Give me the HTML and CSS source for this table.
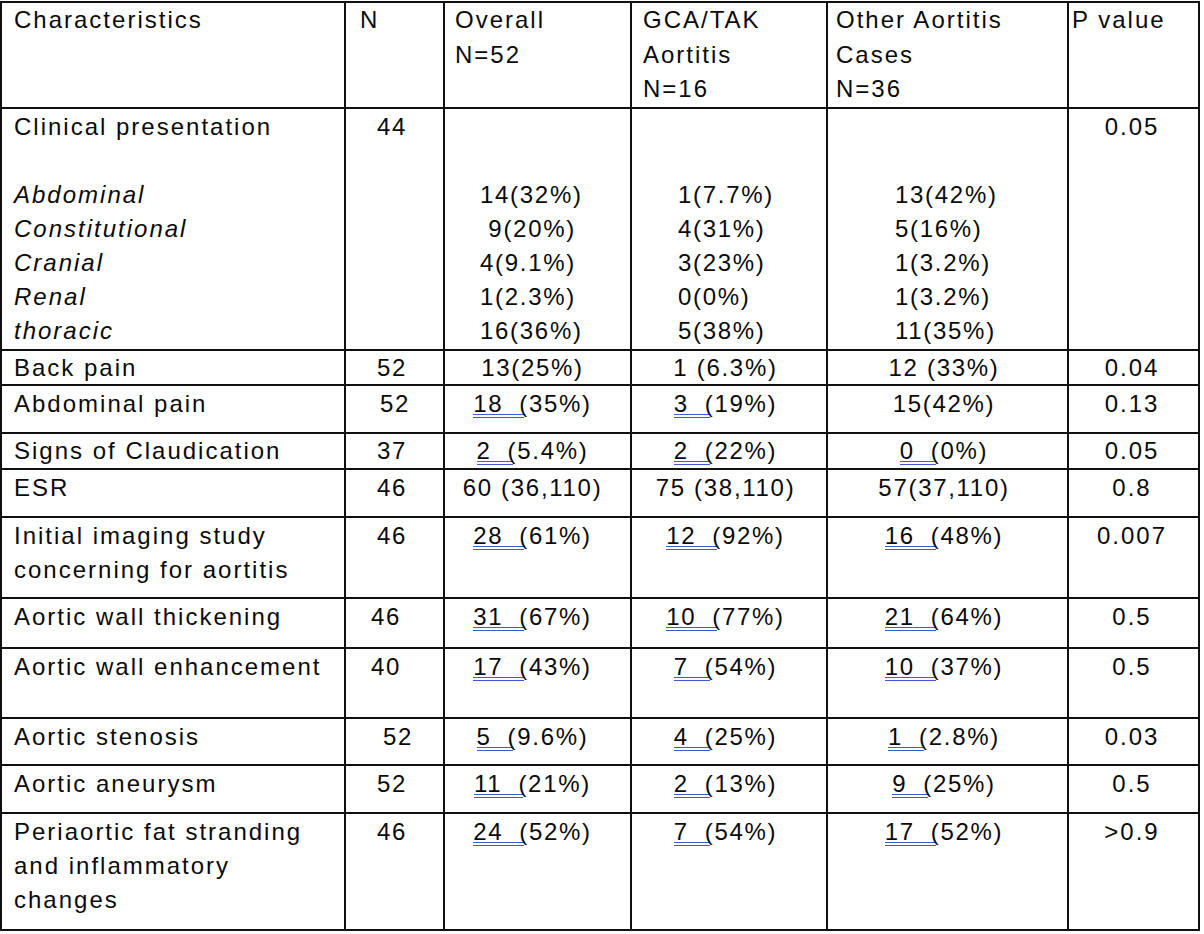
FILE: index.html
```html
<!DOCTYPE html>
<html lang="en">
<head>
<meta charset="utf-8">
<title>Aortitis characteristics</title>
<link rel="stylesheet" href="styles.css">
</head>
<body>
<div class="sheet">
<table class="tbl">
  <colgroup>
    <col class="c-char">
    <col class="c-n">
    <col class="c-all">
    <col class="c-gca">
    <col class="c-oth">
    <col class="c-p">
  </colgroup>
  <thead>
    <tr class="r-head">
      <th class="h-char">Characteristics</th>
      <th class="h-n">N</th>
      <th class="h-all">Overall<br>N=52</th>
      <th class="h-gca">GCA/TAK<br>Aortitis<br>N=16</th>
      <th class="h-oth">Other Aortitis<br>Cases<br>N=36</th>
      <th class="h-p">P value</th>
    </tr>
  </thead>
  <tbody>
    <tr class="r-clin">
      <td class="lbl">Clinical presentation<br><br><i>Abdominal</i><br><i>Constitutional</i><br><i>Cranial</i><br><i>Renal</i><br><i>thoracic</i></td>
      <td class="num n">44</td>
      <td class="num sub sub-all"><br><br>14(32%)<br>&nbsp;9(20%)<br>4(9.1%)<br>1(2.3%)<br>16(36%)</td>
      <td class="num sub sub-gca"><br><br>1(7.7%)<br>4(31%)<br>3(23%)<br>0(0%)<br>5(38%)</td>
      <td class="num sub sub-oth"><br><br>13(42%)<br>5(16%)<br>1(3.2%)<br>1(3.2%)<br>11(35%)</td>
      <td class="num p">0.05</td>
    </tr>
    <tr class="r-back">
      <td class="lbl">Back pain</td>
      <td class="num n">52</td>
      <td class="num all">13(25%)</td>
      <td class="num gca">1 (6.3%)</td>
      <td class="num oth">12 (33%)</td>
      <td class="num p">0.04</td>
    </tr>
    <tr class="r-abd">
      <td class="lbl">Abdominal pain</td>
      <td class="num n shift-r">52</td>
      <td class="num all"><span class="u">18</span>(35%)</td>
      <td class="num gca"><span class="u">3</span>(19%)</td>
      <td class="num oth">15(42%)</td>
      <td class="num p">0.13</td>
    </tr>
    <tr class="r-claud">
      <td class="lbl">Signs of Claudication</td>
      <td class="num n">37</td>
      <td class="num all"><span class="u">2</span>(5.4%)</td>
      <td class="num gca"><span class="u">2</span>(22%)</td>
      <td class="num oth"><span class="u">0</span>(0%)</td>
      <td class="num p">0.05</td>
    </tr>
    <tr class="r-esr">
      <td class="lbl">ESR</td>
      <td class="num n">46</td>
      <td class="num all">60 (36,110)</td>
      <td class="num gca">75 (38,110)</td>
      <td class="num oth">57(37,110)</td>
      <td class="num p">0.8</td>
    </tr>
    <tr class="r-img">
      <td class="lbl">Initial imaging study concerning for aortitis</td>
      <td class="num n">46</td>
      <td class="num all"><span class="u">28</span>(61%)</td>
      <td class="num gca"><span class="u">12</span>(92%)</td>
      <td class="num oth"><span class="u">16</span>(48%)</td>
      <td class="num p">0.007</td>
    </tr>
    <tr class="r-thick">
      <td class="lbl">Aortic wall thickening</td>
      <td class="num n shift-l">46</td>
      <td class="num all"><span class="u">31</span>(67%)</td>
      <td class="num gca"><span class="u">10</span>(77%)</td>
      <td class="num oth"><span class="u">21</span>(64%)</td>
      <td class="num p">0.5</td>
    </tr>
    <tr class="r-enh">
      <td class="lbl">Aortic wall enhancement</td>
      <td class="num n shift-l">40</td>
      <td class="num all"><span class="u">17</span>(43%)</td>
      <td class="num gca"><span class="u">7</span>(54%)</td>
      <td class="num oth"><span class="u">10</span>(37%)</td>
      <td class="num p">0.5</td>
    </tr>
    <tr class="r-sten">
      <td class="lbl">Aortic stenosis</td>
      <td class="num n shift-rr">52</td>
      <td class="num all"><span class="u">5</span>(9.6%)</td>
      <td class="num gca"><span class="u">4</span>(25%)</td>
      <td class="num oth"><span class="u">1</span>(2.8%)</td>
      <td class="num p">0.03</td>
    </tr>
    <tr class="r-aneu">
      <td class="lbl">Aortic aneurysm</td>
      <td class="num n">52</td>
      <td class="num all"><span class="u">11</span>(21%)</td>
      <td class="num gca"><span class="u">2</span>(13%)</td>
      <td class="num oth"><span class="u">9</span>(25%)</td>
      <td class="num p">0.5</td>
    </tr>
    <tr class="r-peri">
      <td class="lbl">Periaortic fat stranding and inflammatory changes</td>
      <td class="num n">46</td>
      <td class="num all"><span class="u">24</span>(52%)</td>
      <td class="num gca"><span class="u">7</span>(54%)</td>
      <td class="num oth"><span class="u">17</span>(52%)</td>
      <td class="num p">&gt;0.9</td>
    </tr>
  </tbody>
</table>
</div>
</body>
</html>
```
FILE: styles.css
```css
html, body {
  margin: 0;
  padding: 0;
  background: #ffffff;
}

body {
  font-family: "Liberation Sans", Arial, sans-serif;
  color: #0a0a0a;
}

.sheet {
  padding-top: 1px;
}

.tbl {
  border-collapse: collapse;
  table-layout: fixed;
  width: 1198px;
}

.c-char { width: 344px; }
.c-n    { width: 99px; }
.c-all  { width: 187px; }
.c-gca  { width: 196px; }
.c-oth  { width: 241px; }
.c-p    { width: 131px; }

.tbl th,
.tbl td {
  border: 2px solid #111111;
  vertical-align: top;
  padding: 1px 2px 0 0;
  font-size: 24px;
  line-height: 34px;
  font-weight: 400;
  text-align: left;
  letter-spacing: 2px;
  white-space: normal;
}

.tbl th { line-height: 34.5px; padding-top: 0; }

.tbl th.h-char { padding-left: 12px; }
.tbl th.h-n    { padding-left: 14px; }
.tbl th.h-all  { padding-left: 10px; }
.tbl th.h-gca  { padding-left: 11px; }
.tbl th.h-oth  { padding-left: 8px; }
.tbl th.h-p    { padding-left: 3px; }

.tbl td.lbl {
  padding-left: 12px;
  padding-right: 4px;
}

.tbl td.num {
  text-align: center;
  letter-spacing: 1.7px;
  white-space: nowrap;
}

.tbl td.n   { padding-left: 0; padding-right: 5px; }
.tbl td.all { padding-left: 0; padding-right: 10px; }
.tbl td.gca { padding-left: 0; padding-right: 7px; }
.tbl td.oth { padding-left: 0; padding-right: 7px; }
.tbl td.p   { padding-left: 0; padding-right: 3px; letter-spacing: 2px; }

.tbl td.shift-l  { padding-right: 17px; }
.tbl td.shift-r  { padding-right: 0; padding-left: 1px; }
.tbl td.shift-rr { padding-right: 0; padding-left: 7px; }

.tbl td.sub { text-align: left; padding-right: 0; }
.tbl td.sub-all { padding-left: 35px; }
.tbl td.sub-gca { padding-left: 46px; }
.tbl td.sub-oth { padding-left: 67px; }

.u {
  display: inline-block;
  padding-right: 21px;
  margin-right: -5px;
  background:
    linear-gradient(#3a5ad6, #3a5ad6) 0 27px / 100% 1px no-repeat,
    linear-gradient(#3a5ad6, #3a5ad6) 0 30px / 100% 1px no-repeat;
}

.tbl .r-back td  { padding-top: 0; line-height: 33px; }
.tbl .r-claud td { padding-top: 0; }

.r-head  { height: 105px; }
.r-clin  { height: 242px; }
.r-back  { height: 35px; }
.r-abd   { height: 48px; }
.r-claud { height: 36px; }
.r-esr   { height: 48px; }
.r-img   { height: 81px; }
.r-thick { height: 50px; }
.r-enh   { height: 70px; }
.r-sten  { height: 47px; }
.r-aneu  { height: 48px; }
.r-peri  { height: 117px; }
```
